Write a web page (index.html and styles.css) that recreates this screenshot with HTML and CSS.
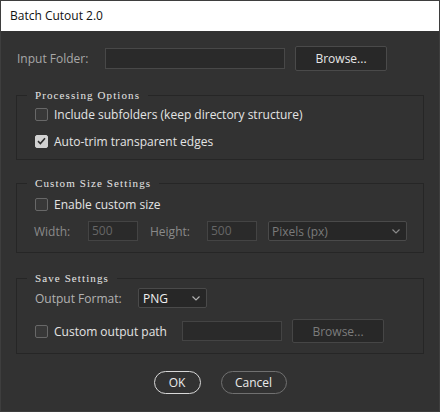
FILE: index.html
```html
<!DOCTYPE html>
<html lang="en">
<head>
    <meta charset="UTF-8">
    <title>Batch Cutout 2.0</title>
    <link rel="stylesheet" href="styles.css">
</head>
<body>
    <div class="window">
        <div class="titlebar">Batch Cutout 2.0</div>

        <div class="panel">
            <div class="folder-row">
                <span class="label folder-label">Input Folder:</span>
                <div class="field folder-field"></div>
                <button class="btn browse" type="button">Browse...</button>
            </div>

            <fieldset class="group processing">
                <legend>Processing Options</legend>
                <label class="check">
                    <span class="box"></span>Include subfolders (keep directory structure)
                </label>
                <label class="check">
                    <span class="box on">
                        <svg width="9" height="8" viewBox="0 0 9 8"><path d="M1 4.2 L3.4 6.5 L8 1.3" fill="none" stroke="#2e2e2e" stroke-width="1.6"/></svg>
                    </span>Auto-trim transparent edges
                </label>
            </fieldset>

            <fieldset class="group size">
                <legend>Custom Size Settings</legend>
                <label class="check">
                    <span class="box"></span>Enable custom size
                </label>
                <div class="size-row">
                    <span class="label muted width-label">Width:</span>
                    <div class="field num">500</div>
                    <span class="label muted height-label">Height:</span>
                    <div class="field num">500</div>
                    <div class="select units disabled">
                        <span>Pixels (px)</span>
                        <svg width="8" height="5" viewBox="0 0 8 5"><path d="M0.5 0.5 L4 4 L7.5 0.5" fill="none" stroke="#8a8a8a" stroke-width="1.2"/></svg>
                    </div>
                </div>
            </fieldset>

            <fieldset class="group save">
                <legend>Save Settings</legend>
                <div class="format-row">
                    <span class="label format-label">Output Format:</span>
                    <div class="select format">
                        <span>PNG</span>
                        <svg width="8" height="5" viewBox="0 0 8 5"><path d="M0.5 0.5 L4 4 L7.5 0.5" fill="none" stroke="#b0b0b0" stroke-width="1.2"/></svg>
                    </div>
                </div>
                <div class="path-row">
                    <label class="check path-check">
                        <span class="box"></span>Custom output path
                    </label>
                    <div class="field path-field"></div>
                    <button class="btn browse disabled" type="button">Browse...</button>
                </div>
            </fieldset>

            <div class="actions">
                <button class="pill ok" type="button">OK</button>
                <button class="pill cancel" type="button">Cancel</button>
            </div>
        </div>
    </div>
</body>
</html>
```

FILE: styles.css
```css
body, html {
    margin: 0;
    padding: 0;
    font: 12px 'Open Sans', 'Liberation Sans', sans-serif;
}

.window {
    width: 440px;
    height: 412px;
    box-sizing: border-box;
    border: 1px solid #3e3e3e;
    background-color: #323232;
    color: #e2e2e2;
}

.titlebar {
    height: 30px;
    line-height: 30px;
    padding-left: 9px;
    background-color: #fff;
    color: #111;
}

.panel {
    padding: 15px 15px 0 15px;
}

.label {
    color: #a8a8a8;
}

.muted {
    color: #8a8a8a;
}

/* input folder line */
.folder-row {
    display: flex;
    align-items: center;
    height: 25px;
}

.folder-label {
    width: 88px;
    padding-left: 1px;
}

.field {
    box-sizing: border-box;
    height: 21px;
    background-color: #2a2a2a;
    border: 1px solid #484848;
}

.folder-field {
    width: 180px;
    margin-right: 10px;
}

.btn {
    box-sizing: border-box;
    width: 92px;
    height: 25px;
    padding: 0;
    background-color: #282828;
    border: 1px solid #4a4a4a;
    border-radius: 2px;
    color: #e6e6e6;
    font: inherit;
}

.btn.disabled {
    height: 24px;
    color: #7c7c7c;
    border-color: #464646;
}

/* group boxes */
.group {
    margin: 0;
    border: 1px solid #262626;
    padding: 0 0 0 18px;
}

.group legend {
    padding: 0 8px;
    margin-left: -8px;
    font: 11px/12px 'Liberation Serif', serif;
    letter-spacing: 1.1px;
    color: #e6e6e6;
}

.processing {
    margin-top: 18px;
    padding-top: 3px;
    padding-bottom: 8px;
}

.size {
    margin-top: 17px;
    padding-top: 5px;
    padding-bottom: 10px;
}

.save {
    margin-top: 19px;
    padding-top: 4px;
    padding-bottom: 10px;
}

.check {
    display: flex;
    align-items: center;
    height: 20px;
    color: #e4e4e4;
}

.processing .check + .check {
    margin-top: 7px;
}

.box {
    box-sizing: border-box;
    width: 13px;
    height: 13px;
    margin-right: 6px;
    border: 1px solid #686868;
    border-radius: 2px;
    background-color: #383838;
    display: flex;
    align-items: center;
    justify-content: center;
}

.box.on {
    background-color: #d2d2d2;
    border-color: #d2d2d2;
}

/* width / height line */
.size-row {
    display: flex;
    align-items: center;
    height: 22px;
    margin-top: 6px;
    margin-left: -1px;
}

.width-label {
    width: 54px;
}

.height-label {
    width: 57px;
    margin-left: 12px;
}

.num {
    width: 50px;
    height: 20px;
    line-height: 18px;
    padding-left: 3px;
    color: #666;
    border-color: #444;
}

.select {
    box-sizing: border-box;
    display: flex;
    align-items: center;
    justify-content: space-between;
    height: 20px;
    padding: 0 6px 0 3px;
    background-color: #272727;
    border: 1px solid #4a4a4a;
    border-radius: 2px;
}

.units {
    width: 139px;
    margin-left: 11px;
    color: #7a7a7a;
}

.format-row {
    display: flex;
    align-items: center;
    height: 20px;
}

.format-label {
    width: 103px;
    color: #b2b2b2;
}

.format {
    width: 69px;
    padding-left: 4px;
    color: #f0f0f0;
}

.path-row {
    display: flex;
    align-items: center;
    height: 24px;
    margin-top: 11px;
}

.path-check {
    width: 147px;
}

.path-field {
    width: 100px;
    height: 20px;
    margin-right: 10px;
    border-color: #444;
}

/* OK / Cancel */
.actions {
    display: flex;
    justify-content: center;
    gap: 20px;
    margin-top: 17px;
}

.pill {
    box-sizing: border-box;
    height: 23px;
    padding: 0;
    border-radius: 12px;
    background-color: transparent;
    font: inherit;
    color: #eaeaea;
}

.ok {
    width: 47px;
    border: 1.5px solid #d8d8d8;
}

.cancel {
    width: 66px;
    border: 1.5px solid #707070;
}
```
